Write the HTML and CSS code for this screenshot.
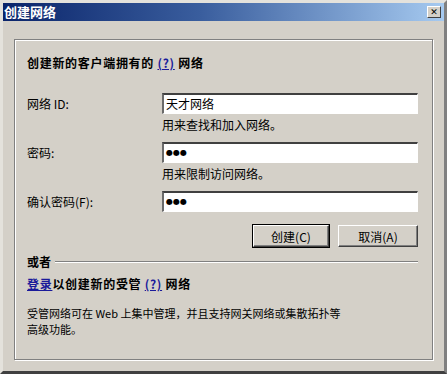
FILE: index.html
```html
<!DOCTYPE html>
<html lang="zh-CN">
<head>
  <meta charset="UTF-8">
  <title>创建网络</title>
  <link rel="stylesheet" href="styles.css">
</head>
<body>
  <div class="window">
    <div class="titlebar">
      <span class="title">创建网络</span>
      <span class="close-btn">✕</span>
    </div>

    <div class="panel">
      <div class="heading">创建新的客户端拥有的 <a class="link">(?)</a> 网络</div>

      <div class="form">
        <label class="label">网络 ID:</label>
        <div class="field">天才网络</div>
        <div></div>
        <div class="hint">用来查找和加入网络。</div>

        <label class="label">密码:</label>
        <div class="field dots">●●●</div>
        <div></div>
        <div class="hint">用来限制访问网络。</div>

        <label class="label">确认密码(F):</label>
        <div class="field dots">●●●</div>
      </div>

      <div class="buttons">
        <button class="btn default">创建(C)</button>
        <button class="btn">取消(A)</button>
      </div>

      <div class="separator">
        <span class="sep-text">或者</span>
        <span class="sep-line"></span>
      </div>

      <div class="heading login"><a class="link">登录</a>以创建新的受管 <a class="link">(?)</a> 网络</div>

      <p class="desc">受管网络可在 Web 上集中管理，并且支持网关网络或集散拓扑等<br>高级功能。</p>
    </div>
  </div>
</body>
</html>
```

FILE: styles.css
```css
html, body { margin: 0; padding: 0; }
body {
  width: 447px; height: 374px; overflow: hidden;
  background: #d4d0c8;
  font-family: "Noto Sans CJK SC", "DejaVu Sans", sans-serif;
  font-size: 12px; color: #000;
}
.window {
  box-sizing: border-box;
  width: 447px; height: 374px;
  border-style: solid;
  border-width: 3px;
  border-color: #e4e2dc #808080 #404040 #e4e2dc;
  background: #d4d0c8;
}
.titlebar {
  height: 18px;
  display: flex; align-items: center; justify-content: space-between;
  padding: 0 3px 0 1px;
  background: linear-gradient(to right, #0a246a, #3a5e9e 45%, #a6caf0);
}
.title { color: #fff; font-weight: bold; font-size: 13px; line-height: 18px; }
.close-btn {
  width: 14px; height: 12px;
  box-sizing: border-box;
  background: #d4d0c8;
  border-style: solid; border-width: 1px;
  border-color: #fff #404040 #404040 #fff;
  font-family: "DejaVu Sans", sans-serif;
  font-size: 9px; font-weight: bold; line-height: 10px; text-align: center;
}
.panel {
  margin: 18px 11px 0 11px;
  height: 321px;
  box-sizing: border-box;
  border: 1px solid #808080;
  box-shadow: inset 1px 1px 0 #fff, 1px 1px 0 #fff;
  padding: 16px 14px 0 12px;
}
.heading { font-weight: bold; line-height: 14px; letter-spacing: 0.7px; }
.link { color: #1a1a9a; text-decoration: underline; }
.form {
  display: grid;
  grid-template-columns: 135px 1fr;
  margin-top: 23px;
  align-items: center;
}
.label { line-height: 14px; }
.field {
  height: 21px; box-sizing: border-box;
  background: #fff;
  border-style: solid; border-width: 2px 1px 1px 2px;
  border-color: #404040 #fff #fff #6a6a6a;
  padding-left: 2px;
  line-height: 18px; font-size: 12px;
}
.dots { font-size: 8px; font-family: "DejaVu Sans", sans-serif; line-height: 17px; }
.hint { line-height: 14px; margin: 4px 0 10px; }
.buttons {
  display: flex; justify-content: flex-end; gap: 9px;
  margin-top: 13px;
}
.btn {
  width: 76px; height: 22px; box-sizing: border-box;
  font-family: inherit; font-size: 12px; color: #000;
  background: #d4d0c8;
  border-style: solid; border-width: 1px;
  border-color: #fff #404040 #404040 #fff;
  box-shadow: inset -1px -1px 0 #808080;
  padding: 0;
}
.btn + .btn { width: 80px; }
.btn.default { outline: 1px solid #000; }
.separator {
  display: flex; align-items: center; gap: 4px;
  margin-top: 8px;
}
.sep-text { font-weight: bold; line-height: 14px; }
.sep-line { flex: 1; height: 1px; background: #808080; border-bottom: 1px solid #fff; }
.login { margin-top: 8px; }
.desc { margin: 14px 0 0; font-size: 11px; line-height: 16px; }
```
